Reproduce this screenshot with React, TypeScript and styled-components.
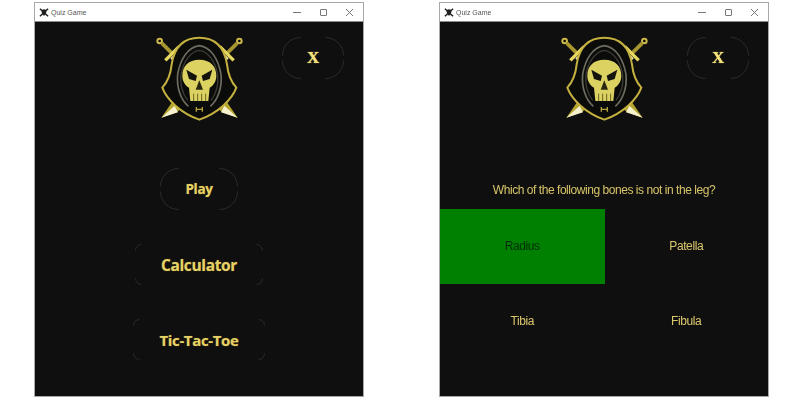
import styled, { createGlobalStyle } from 'styled-components';

const GlobalStyle = createGlobalStyle`
  html, body {
    margin: 0;
    padding: 0;
    background: #fff;
    overflow: hidden;
  }
`;

const Page = styled.div`
  display: flex;
  gap: 75px;
  width: 800px;
  height: 400px;
  box-sizing: border-box;
  padding: 2px 0 0 34px;
  filter: blur(0.45px);
`;

const Window = styled.div`
  display: flex;
  flex-direction: column;
  width: 330px;
  height: 395px;
  box-sizing: border-box;
  border: 1px solid #a8a8a8;
  background: #0f0f0f;
`;

const TitleBar = styled.div`
  display: flex;
  align-items: center;
  flex: none;
  height: 18px;
  padding-left: 4px;
  background: #fff;
  border-bottom: 1px solid #8c8c8c;
`;

const TitleText = styled.span`
  margin-left: 2px;
  font: 7px 'Liberation Sans', Arial, sans-serif;
  color: #555;
`;

const Controls = styled.div`
  display: flex;
  align-items: center;
  gap: 17px;
  margin-left: auto;
  padding-right: 9px;
  color: #777;
`;

const Header = styled.div`
  display: grid;
  grid-template-columns: 1fr 105px 1fr;
  flex: none;
  padding-top: 9px;
`;

const CloseSlot = styled.div`
  display: flex;
  justify-content: flex-end;
  padding: 6px 19px 0 0;
`;

const RingButton = styled.div<{ $w: number; $h: number; $size?: number }>`
  position: relative;
  display: flex;
  align-items: center;
  justify-content: center;
  flex: none;
  width: ${(p) => p.$w}px;
  height: ${(p) => p.$h}px;
  color: #e6d166;
  font: 700 ${(p) => p.$size ?? 14}px 'Open Sans', sans-serif;
  letter-spacing: -0.35px;
  text-shadow: 0 0 1px #7c6c20;
`;

const CloseLabel = styled.span`
  font: 700 17px 'Liberation Serif', serif;
  color: #f4e27c;
  text-shadow: 0 0 1px #f4e27c;
`;

const Arcs = styled.svg`
  position: absolute;
  inset: 0;
`;

const Menu = styled.div`
  display: flex;
  flex-direction: column;
  align-items: center;
  gap: 34px;
  margin-top: 42px;
`;

const Question = styled.div`
  display: flex;
  align-items: flex-end;
  justify-content: center;
  flex: none;
  height: 71px;
  padding-bottom: 12px;
  font: 12px 'Liberation Sans', Arial, sans-serif;
  letter-spacing: -0.45px;
  color: #d8c468;
`;

const Answers = styled.div`
  display: grid;
  grid-template-columns: 164.5px 1fr;
  grid-auto-rows: 74.5px;
`;

const Answer = styled.div<{ $correct?: boolean }>`
  display: flex;
  align-items: center;
  justify-content: center;
  font: 12px 'Liberation Sans', Arial, sans-serif;
  letter-spacing: -0.4px;
  background: ${(p) => (p.$correct ? '#008000' : 'transparent')};
  color: ${(p) => (p.$correct ? '#022c08' : '#dcc86c')};
`;

const RingArcs = ({ w, h, r }: { w: number; h: number; r: number }) => {
  const a = 0.5;
  const b = w - 0.5;
  const c = h - 0.5;
  return (
    <Arcs width={w} height={h} fill="none" stroke="#2c2c2a" strokeWidth="1">
      <path d={`M${a + r} ${a}A${r} ${r} 0 0 0 ${a} ${a + r}`} />
      <path d={`M${b - r} ${a}A${r} ${r} 0 0 1 ${b} ${a + r}`} />
      <path d={`M${a} ${c - r}A${r} ${r} 0 0 0 ${a + r} ${c}`} />
      <path d={`M${b} ${c - r}A${r} ${r} 0 0 1 ${b - r} ${c}`} />
    </Arcs>
  );
};

const AppIcon = () => (
  <svg width="10" height="9" viewBox="0 0 12 11">
    <path d="M1 1l10 9M11 1L1 10" stroke="#222" strokeWidth="1.8" />
    <ellipse cx="6" cy="4.5" rx="3" ry="3" fill="#222" />
    <rect x="4.5" y="6" width="3" height="3" fill="#222" />
  </svg>
);

const WindowControls = () => (
  <Controls>
    <svg width="9" height="9" viewBox="0 0 9 9" stroke="currentColor">
      <path d="M0 4.5h8" />
    </svg>
    <svg width="9" height="9" viewBox="0 0 9 9" fill="none" stroke="currentColor">
      <rect x="1.5" y="1.5" width="6" height="6" rx="0.5" />
    </svg>
    <svg width="9" height="9" viewBox="0 0 9 9" stroke="currentColor">
      <path d="M1 1l7 7M8 1L1 8" />
    </svg>
  </Controls>
);

const Sword = ({ flip }: { flip?: boolean }) => (
  <g transform={flip ? 'translate(315 0) scale(-1 1)' : undefined}>
    <circle cx="38" cy="30" r="7" fill="none" stroke="#cdb94a" strokeWidth="6" />
    <path d="M45 37L76 68" stroke="#a8962f" strokeWidth="11" />
    <path d="M55 88L97 46" stroke="#e6d860" strokeWidth="10" />
    <path d="M70 82L92 60L116 82L92 106Z" fill="#efe9b0" />
    <path d="M200 190L240 214L272 260L226 244L190 214Z" fill="#b5a52f" />
    <path d="M232 224L272 260L222 244Z" fill="#f6f2d0" />
  </g>
);

const Logo = () => (
  <svg width="105" height="95" viewBox="0 0 315 285">
    <Sword />
    <Sword flip />
    <path
      d="M157 20C205 20 232 50 240 100C243 130 250 150 268 170C255 205 215 245 157 266C99 245 59 205 46 170C64 150 71 130 74 100C82 50 109 20 157 20Z"
      fill="#0b0b0a"
      stroke="#c4b13f"
      strokeWidth="6"
    />
    <path
      d="M157 44C192 48 214 85 222 130C226 170 212 208 190 226M157 44C122 48 100 85 92 130C88 170 102 208 124 226"
      fill="none"
      stroke="#6f6d60"
      strokeWidth="5"
    />
    <path
      d="M157 58C184 62 204 90 212 130C215 160 206 190 192 208M157 58C130 62 110 90 102 130C99 160 108 190 122 208"
      fill="none"
      stroke="#3c3b34"
      strokeWidth="4"
    />
    <path
      d="M157 86C190 86 208 106 208 134C208 152 198 164 188 170L184 210L130 210L126 170C116 164 106 152 106 134C106 106 124 86 157 86Z"
      fill="#dcd262"
    />
    <path d="M118 116L150 134L146 150L126 144Z" fill="#14130c" />
    <path d="M196 116L164 134L168 150L188 144Z" fill="#14130c" />
    <path d="M157 148L168 176L146 176Z" fill="#2a2710" />
    <path d="M140 188V210M152 188V210M164 188V210M176 188V210" stroke="#6b6228" strokeWidth="3" />
    <path d="M148 228V242M166 228V242M148 235H166" stroke="#b5a33e" strokeWidth="4" />
  </svg>
);

const GameWindow = ({ children }: { children: React.ReactNode }) => (
  <Window>
    <TitleBar>
      <AppIcon />
      <TitleText>Quiz Game</TitleText>
      <WindowControls />
    </TitleBar>
    <Header>
      <div />
      <Logo />
      <CloseSlot>
        <RingButton $w={62} $h={42}>
          <RingArcs w={62} h={42} r={18} />
          <CloseLabel>X</CloseLabel>
        </RingButton>
      </CloseSlot>
    </Header>
    {children}
  </Window>
);

const menuItems = [
  { label: 'Play', w: 78, h: 42, r: 18, size: 13.5 },
  { label: 'Calculator', w: 128, h: 41, r: 6, size: 15.5 },
  { label: 'Tic-Tac-Toe', w: 132, h: 41, r: 6, size: 15 },
];

const answers = ['Radius', 'Patella', 'Tibia', 'Fibula'];

export default function App() {
  return (
    <>
      <GlobalStyle />
      <Page>
        <GameWindow>
          <Menu>
            {menuItems.map((item) => (
              <RingButton key={item.label} $w={item.w} $h={item.h} $size={item.size}>
                <RingArcs w={item.w} h={item.h} r={item.r} />
                {item.label}
              </RingButton>
            ))}
          </Menu>
        </GameWindow>
        <GameWindow>
          <Question>Which of the following bones is not in the leg?</Question>
          <Answers>
            {answers.map((answer) => (
              <Answer key={answer} $correct={answer === 'Radius'}>
                {answer}
              </Answer>
            ))}
          </Answers>
        </GameWindow>
      </Page>
    </>
  );
}
